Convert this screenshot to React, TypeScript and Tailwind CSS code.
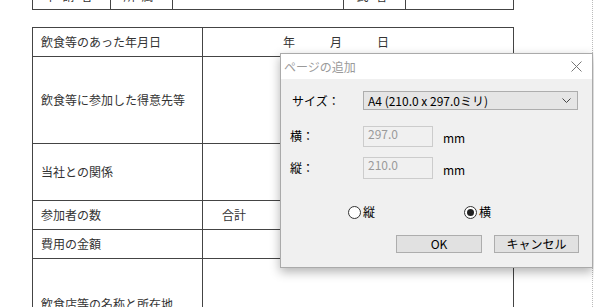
import React from 'react';

const jp = { fontFamily: '"Noto Sans CJK JP", sans-serif' };

const rows = [
  { label: '飲食等のあった年月日', h: 'h-[29px]', right: 'date' },
  { label: '飲食等に参加した得意先等', h: 'h-[87px]' },
  { label: '当社との関係', h: 'h-[57px]' },
  { label: '参加者の数', h: 'h-[29px]', right: 'total' },
  { label: '費用の金額', h: 'h-[29px]' },
  { label: '飲食店等の名称と所在地', h: 'h-[90px]', bottom: true },
];

const Radio = ({ checked, label }: { checked?: boolean; label: string }) => (
  <div className="flex items-center gap-[2px]">
    <span className="w-[13px] h-[13px] rounded-full border border-[#333] bg-white flex items-center justify-center">
      {checked && <span className="w-[7px] h-[7px] rounded-full bg-[#222]" />}
    </span>
    <span className="text-[12px] text-black">{label}</span>
  </div>
);

const AddPageDialog = () => (
  <div
    className="absolute left-[280px] top-[53px] w-[313px] h-[215px] bg-[#f0f0f0] border border-[#aaa] shadow-[0_4px_10px_rgba(0,0,0,0.3)]"
    style={jp}
  >
    <div className="h-[25px] bg-white flex items-center justify-between pl-[3px] pr-[10px]">
      <span className="text-[12px] text-[#9a9a9a]">ページの追加</span>
      <svg width="11" height="11" viewBox="0 0 11 11" stroke="#777" strokeWidth="1">
        <path d="M0.5 0.5 L10.5 10.5 M10.5 0.5 L0.5 10.5" />
      </svg>
    </div>

    <div className="flex items-center pl-[11px] mt-[12px]">
      <span className="w-[71px] text-[12px] text-black">サイズ：</span>
      <div className="w-[215px] h-[19px] bg-[#e5e5e5] border border-[#adadad] flex items-center justify-between pl-[4px] pr-[6px]">
        <span className="text-[12px] text-black">A4 (210.0 x 297.0ミリ)</span>
        <svg width="9" height="6" viewBox="0 0 9 6" fill="none" stroke="#444" strokeWidth="1">
          <path d="M0.5 0.5 L4.5 4.5 L8.5 0.5" />
        </svg>
      </div>
    </div>

    <div className="flex items-center pl-[9px] mt-[15px]">
      <span className="w-[73px] text-[12px] text-black">横：</span>
      <div className="w-[70px] h-[21px] bg-[#f0f0f0] border border-[#cccccc] pl-[4px] text-[12px] leading-[14px] text-[#9a9a9a]">
        297.0
      </div>
      <span className="ml-[10px] mt-[4px] text-[12px] text-black">mm</span>
    </div>

    <div className="flex items-center pl-[9px] mt-[10px]">
      <span className="w-[73px] text-[12px] text-black">縦：</span>
      <div className="w-[70px] h-[22px] bg-[#f0f0f0] border border-[#cccccc] pl-[4px] text-[12px] leading-[14px] text-[#9a9a9a]">
        210.0
      </div>
      <span className="ml-[10px] mt-[4px] text-[12px] text-black">mm</span>
    </div>

    <div className="flex items-center pl-[67px] gap-[89px] mt-[24px]">
      <Radio label="縦" />
      <Radio checked label="横" />
    </div>

    <div className="flex pl-[115px] gap-[12px] mt-[14px]">
      <button className="w-[86px] h-[18px] bg-[#e1e1e1] border border-[#adadad] text-[12px] leading-[14px] text-black">
        OK
      </button>
      <button className="w-[85px] h-[18px] bg-[#e1e1e1] border border-[#adadad] text-[12px] leading-[14px] text-black">
        キャンセル
      </button>
    </div>
  </div>
);

export default function App() {
  return (
    <div className="relative w-[594px] h-[307px] overflow-hidden bg-white" style={jp}>
      <div className="absolute right-[1px] top-0 h-full border-r border-dotted border-[#bbb]" />

      <div className="pl-[32px] -mt-[19px]">
        {/* top table, mostly scrolled out of view */}
        <div className="w-[482px] h-[29px] flex border border-[#444] text-[12px] text-[#333]">
          <div className="w-[78px] border-r border-[#444] flex items-center justify-center tracking-[6px]">申請者</div>
          <div className="w-[62px] border-r border-[#444] flex items-center justify-center tracking-[6px]">所属</div>
          <div className="w-[171px] border-r border-[#444]" />
          <div className="w-[62px] border-r border-[#444] flex items-center justify-center tracking-[6px]">氏名</div>
          <div className="flex-1" />
        </div>

        {/* main form table */}
        <div className="mt-[17px] w-[482px] border-t border-x border-[#444] text-[12px] text-[#333]">
          {rows.map((r) => (
            <div key={r.label} className={`flex ${r.h} ${r.bottom ? '' : 'border-b'} border-[#444]`}>
              <div className="w-[170px] border-r border-[#444] flex items-center pl-[8px]">{r.label}</div>
              <div className="flex-1 flex items-center">
                {r.right === 'date' && (
                  <div className="flex pl-[80px] gap-[35px]">
                    <span>年</span>
                    <span>月</span>
                    <span>日</span>
                  </div>
                )}
                {r.right === 'total' && <span className="pl-[19px]">合計</span>}
              </div>
            </div>
          ))}
        </div>
      </div>

      <AddPageDialog />
    </div>
  );
}
